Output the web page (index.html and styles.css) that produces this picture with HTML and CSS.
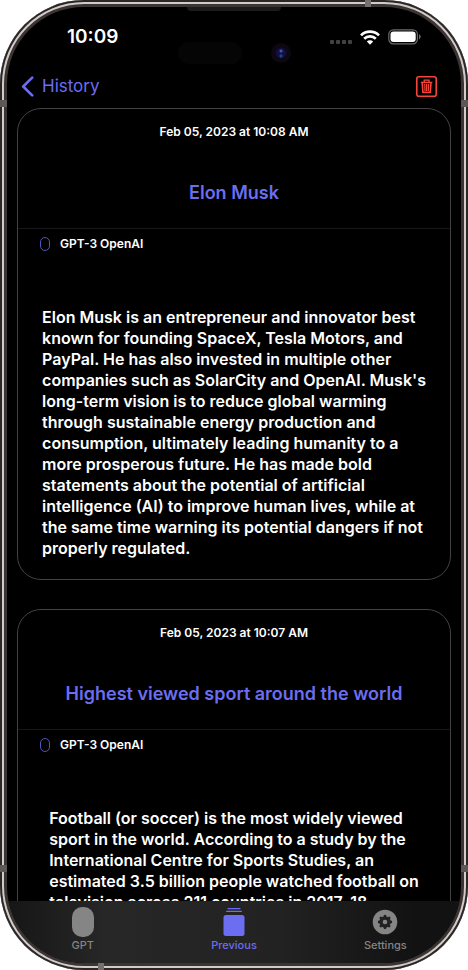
FILE: index.html
```html
<!DOCTYPE html>
<html lang="en">
<head>
<meta charset="utf-8">
<meta name="viewport" content="width=device-width, initial-scale=1">
<title>History</title>
<link rel="stylesheet" href="styles.css">
</head>
<body>
<div class="phone">
  <div class="screen">
    <div class="speaker"></div>
    <div class="sensor"></div>
    <div class="camera"></div>
    <div class="status">
      <time class="clock">10:09</time>
      <div class="indicators">
        <span class="dots"><i></i><i></i><i></i><i></i></span>
        <svg class="wifi" viewBox="0 0 20 15" aria-hidden="true">
          <g fill="none" stroke="#fff" stroke-width="2.7">
            <path d="M1 5.4a12.8 12.8 0 0 1 18 0"/>
            <path d="M4.2 8.8a8.3 8.3 0 0 1 11.6 0"/>
          </g>
          <path fill="#fff" d="M6.8 11.5a4.6 4.6 0 0 1 6.4 0L10 14.8z"/>
        </svg>
        <svg class="battery" viewBox="0 0 33 16" aria-hidden="true">
          <rect x=".8" y=".8" width="28.6" height="14" rx="4.6" fill="none" stroke="#6b6b6b" stroke-width="1.2"/>
          <rect x="2.5" y="2.5" width="25.2" height="10.6" rx="3" fill="#fff"/>
          <path d="M31 5.2q1.7.8 1.7 2.6T31 10.4z" fill="#6b6b6b"/>
        </svg>
      </div>
    </div>
    <header class="nav">
      <a class="back" href="#">
        <svg viewBox="0 0 13 21" aria-hidden="true"><path d="M11.2 1.6 2.2 10.5l9 8.9" fill="none" stroke="currentColor" stroke-width="2.6" stroke-linecap="round" stroke-linejoin="round"/></svg>
        <span>History</span>
      </a>
      <button class="delete" type="button" aria-label="Delete history">
        <svg viewBox="0 0 21 21" fill="none" stroke="currentColor" aria-hidden="true">
          <rect x=".8" y=".8" width="19.4" height="19.4" rx="2" stroke-width="1.6"/>
          <path d="M4.8 6.4h11.6M8.2 6V4.2h4.8V6" stroke-width="1.3"/>
          <path d="M6.2 6.8 6.9 16.3h7.4L15 6.8" stroke-width="1.6"/>
          <path d="M8.8 8l.2 7M10.6 8v7M12.5 8l-.2 7" stroke-width="1.2"/>
        </svg>
      </button>
    </header>
    <main class="list">
      <article class="card">
        <div class="head">
          <time>Feb 05, 2023 at 10:08 AM</time>
          <h2>Elon Musk</h2>
        </div>
        <div class="source"><i class="pill"></i><span>GPT-3 OpenAI</span></div>
        <p>Elon Musk is an entrepreneur and innovator best
known for founding SpaceX, Tesla Motors, and
PayPal. He has also invested in multiple other
companies such as SolarCity and OpenAI. Musk's
long-term vision is to reduce global warming
through sustainable energy production and
consumption, ultimately leading humanity to a
more prosperous future. He has made bold
statements about the potential of artificial
intelligence (AI) to improve human lives, while at
the same time warning its potential dangers if not
properly regulated.</p>
      </article>
      <article class="card">
        <div class="head">
          <time>Feb 05, 2023 at 10:07 AM</time>
          <h2>Highest viewed sport around the world</h2>
        </div>
        <div class="source"><i class="pill"></i><span>GPT-3 OpenAI</span></div>
        <p>Football (or soccer) is the most widely viewed
sport in the world. According to a study by the
International Centre for Sports Studies, an
estimated 3.5 billion people watched football on
television across 211 countries in 2017-18</p>
      </article>
    </main>
    <nav class="tabs">
      <a href="#">
        <svg viewBox="0 0 30 30" aria-hidden="true"><rect x="4" y="0" width="22" height="30" rx="10" fill="currentColor"/></svg>
        <span>GPT</span>
      </a>
      <a class="active" href="#" aria-current="page">
        <svg viewBox="0 0 30 30" fill="currentColor" aria-hidden="true">
          <rect x="8.5" y="1" width="13" height="1.3" rx=".6"/>
          <rect x="7" y="3.8" width="16" height="1.3" rx=".6"/>
          <rect x="4.5" y="8" width="21" height="21" rx="2.5"/>
        </svg>
        <span>Previous</span>
      </a>
      <a href="#">
        <svg viewBox="0 0 30 30" aria-hidden="true">
          <circle cx="15" cy="15" r="12.3" fill="currentColor"/>
          <g fill="#222" stroke="#222" stroke-width="2.8" stroke-linecap="round">
            <circle cx="15" cy="15" r="4.3"/>
            <path d="M15 9.2v11.6M9.2 15h11.6M10.9 10.9l8.2 8.2M10.9 19.1l8.2-8.2"/>
          </g>
          <circle cx="15" cy="15" r="2.3" fill="currentColor"/>
        </svg>
        <span>Settings</span>
      </a>
    </nav>
  </div>
</div>
</body>
</html>
```
FILE: styles.css
```css
* { box-sizing: border-box; }

body {
  margin: 0;
  background: #fff;
  color: #fff;
  font-family: Inter, "Liberation Sans", sans-serif;
}

a { color: inherit; text-decoration: none; }

.phone {
  position: relative;
  height: 100vh;
  padding: 7px;
  border-radius: 84px;
  background: #3a3434;
  box-shadow: inset 0 0 0 2px #29272b, inset 0 0 0 4px #d3cbc4;
}

/* antenna bands across the metal rim */
.phone::before {
  content: "";
  position: absolute;
  inset: 0;
  border-radius: inherit;
  background:
    linear-gradient(#5d5855, #5d5855) 0 100px / 100% 7px no-repeat,
    linear-gradient(#5d5855, #5d5855) 0 calc(100% - 98px) / 100% 7px no-repeat,
    linear-gradient(#77716d, #77716d) calc(100% - 97px) 0 / 6px 7px no-repeat,
    linear-gradient(#77716d, #77716d) 98px 100% / 6px 7px no-repeat;
}

.screen {
  position: relative;
  display: flex;
  flex-direction: column;
  height: 100%;
  border-radius: 77px;
  overflow: hidden;
  background: #000;
}

.speaker, .sensor, .camera { position: absolute; }

.speaker {
  top: 0;
  left: 50%;
  width: 94px;
  height: 4px;
  margin-left: -47px;
  border-radius: 0 0 4px 4px;
  background: #1c1b1c;
}

.sensor {
  top: 35px;
  left: 50%;
  width: 64px;
  height: 22px;
  margin-left: -56px;
  border-radius: 11px;
  background: #050505;
}

.camera {
  top: 36px;
  left: 50%;
  width: 20px;
  height: 20px;
  margin-left: 37px;
  border-radius: 50%;
  background:
    radial-gradient(circle at 10px 8px, #4a5296 0 1px, transparent 2px),
    radial-gradient(circle at 10px 13px, #1f4a70 0 1px, transparent 2px),
    radial-gradient(circle, #101050 0 4px, #0c0711 6px);
}

.status {
  display: flex;
  align-items: center;
  justify-content: space-between;
  height: 60px;
  padding: 0 40px 0 60px;
}

.clock { font-size: 19px; line-height: 24px; font-weight: 600; }

.indicators { display: flex; align-items: center; gap: 8px; }

.dots { display: flex; gap: 2px; padding-top: 10px; }

.dots i {
  width: 4px;
  height: 4px;
  border-radius: 1px;
  background: #414141;
}

.wifi { width: 20px; height: 15px; }
.battery { width: 33px; height: 16px; }

.nav {
  display: flex;
  align-items: center;
  justify-content: space-between;
  height: 38px;
  padding: 0 24px 0 14px;
}

.back {
  display: flex;
  align-items: center;
  gap: 8px;
  color: #6b6ef0;
  font-size: 17px;
  line-height: 24px;
}

.back svg { width: 13px; height: 21px; }

.delete {
  padding: 0;
  border: 0;
  background: none;
  color: #f5443a;
}

.delete svg { display: block; width: 21px; height: 21px; }

.list {
  flex: 1;
  min-height: 0;
  overflow: hidden;
  padding: 3px 10px 0;
}

.card {
  margin-bottom: 29px;
  padding-bottom: 20px;
  border: 1px solid #434343;
  border-radius: 24px;
}

.head {
  display: flex;
  flex-direction: column;
  align-items: center;
  gap: 41px;
  padding: 15px 0 23px;
  border-bottom: 1px solid #171717;
}

.head time, .source { font-size: 12px; line-height: 16px; font-weight: 600; }

h2 {
  margin: 0;
  color: #6b6ef0;
  font-size: 18px;
  line-height: 24px;
  font-weight: 600;
}

.source {
  display: flex;
  align-items: center;
  gap: 10px;
  padding: 7px 22px;
}

.pill {
  width: 10px;
  height: 14px;
  border: 1px solid #5254b8;
  border-radius: 5px;
}

.card p {
  width: fit-content;
  margin: 48px auto 0;
  font-size: 16px;
  line-height: 21px;
  font-weight: 600;
  white-space: pre-line;
}

.tabs {
  display: grid;
  grid-template-columns: repeat(3, 1fr);
  height: 62px;
  padding-top: 6px;
  background: linear-gradient(90deg, #161616, #272727 22%, #222 60%, #121212 90%);
  color: #858585;
  font-size: 11px;
  line-height: 16px;
  font-weight: 500;
}

.tabs a { display: flex; flex-direction: column; align-items: center; }
.tabs svg { width: 30px; height: 30px; }
.tabs .active { color: #6b6ef0; }
```
